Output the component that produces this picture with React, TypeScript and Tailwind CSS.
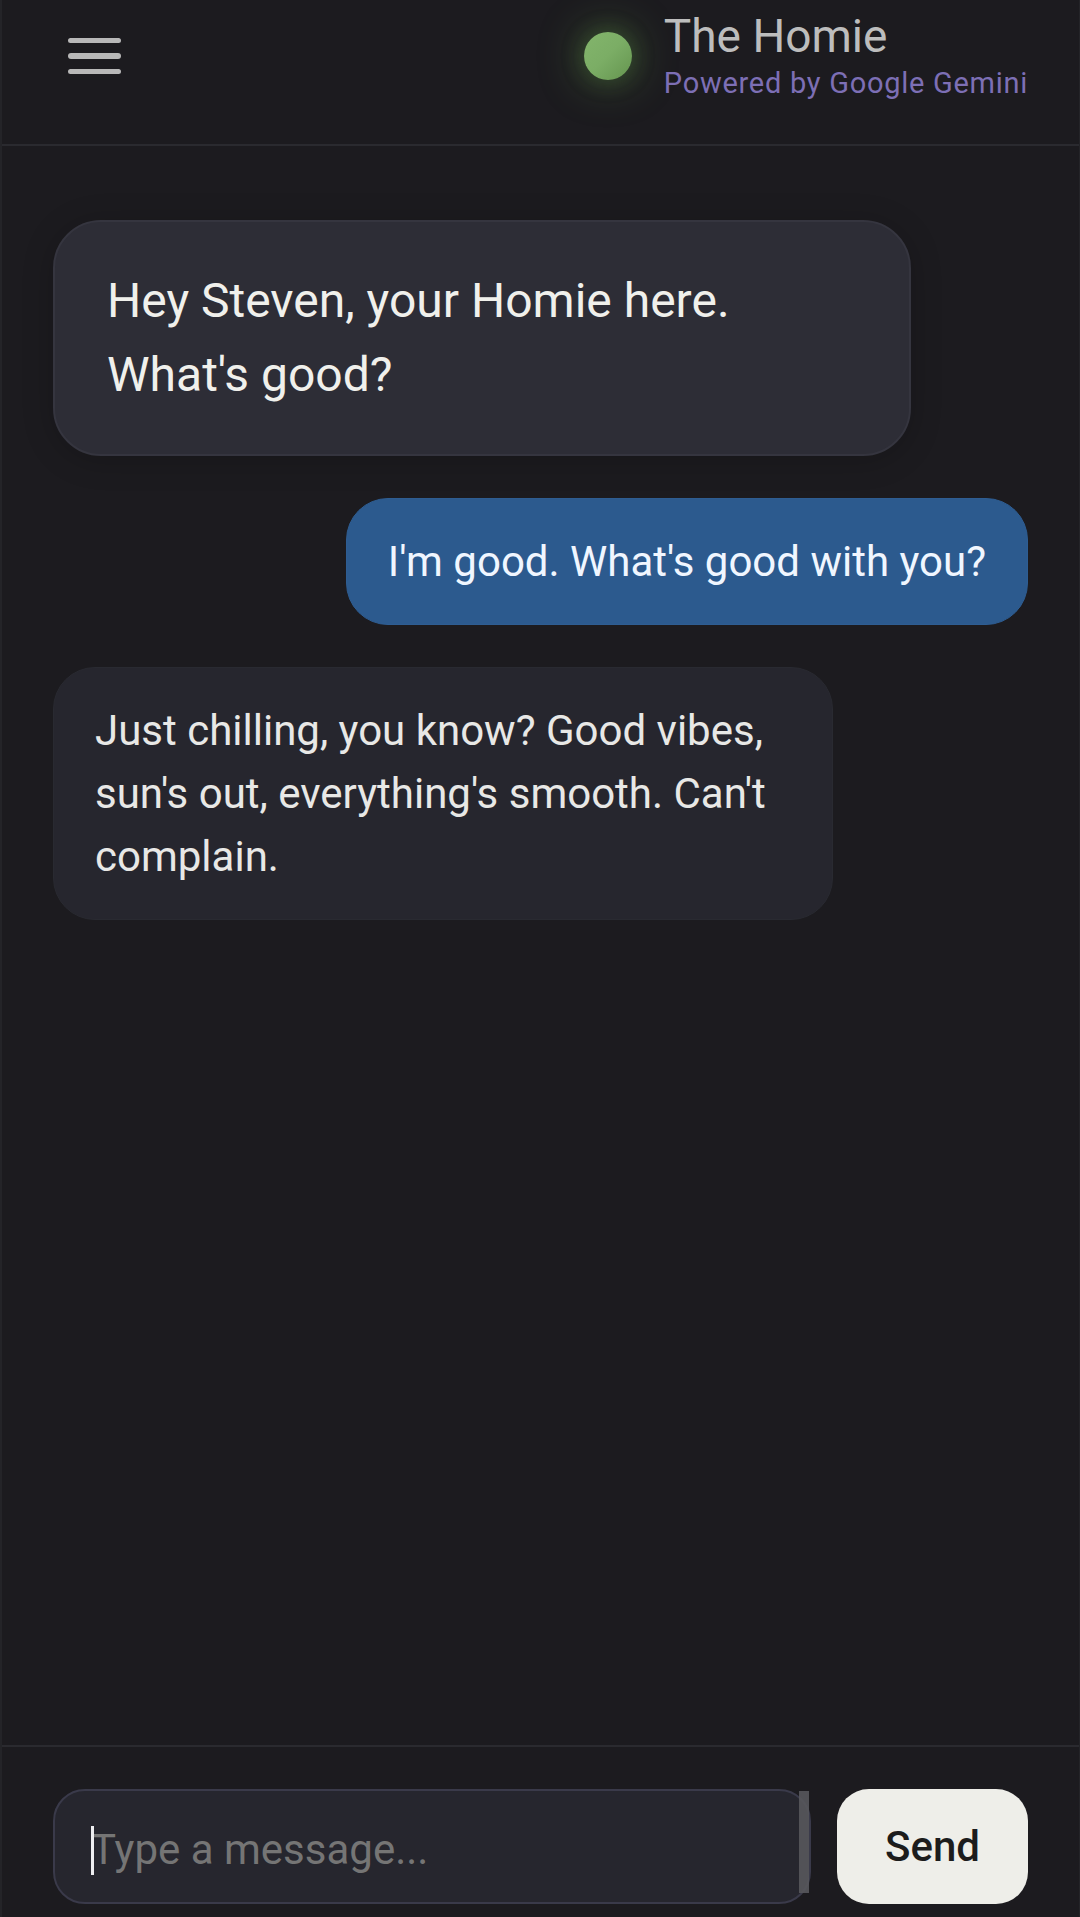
import React, { useState } from "react";

interface Message {
  id: number;
  role: "user" | "bot" | "greeting";
  text: string;
}

const initialMessages: Message[] = [
  { id: 1, role: "greeting", text: "Hey Steven, your Homie here. What's good?" },
  { id: 2, role: "user", text: "I'm good. What's good with you?" },
  {
    id: 3,
    role: "bot",
    text: "Just chilling, you know? Good vibes, sun's out, everything's smooth. Can't complain."
  }
];

const bubbleStyles = {
  greeting:
    "self-start w-[88%] px-[52px] py-[42px] rounded-[48px] border-2 border-[#35353f] bg-[#2d2d36] text-[#f0f0ec] text-[48px] leading-[74px] shadow-[0_4px_32px_rgba(0,0,0,0.2)]",
  user:
    "self-end max-w-[80%] px-[41px] py-[31px] rounded-[42px] border border-[#2e5d92] bg-[#2c5a8e] text-[#f0f6ff] text-[42px] leading-[63px]",
  bot:
    "self-start max-w-[80%] px-[41px] py-[31px] rounded-[42px] border border-[#292a31] bg-[#26262e] text-[#e8e8e6] text-[42px] leading-[63px]"
};

const Header: React.FC = () => (
  <header className="flex items-center justify-between px-[51px] pt-[9px] pb-[41px] border-b-2 border-[#2a2a2f]">
    <button type="button" aria-label="Open menu" className="px-[15px] py-2">
      <svg width="53" height="36" viewBox="0 0 53 36" fill="#b8b8b8">
        <rect width="53" height="5" rx="2.5" />
        <rect y="15" width="53" height="6" rx="3" />
        <rect y="31" width="53" height="5" rx="2.5" />
      </svg>
    </button>

    <div className="flex items-center gap-8">
      <div className="w-12 h-12 rounded-full bg-linear-to-br from-[#83b56c] via-[#7bad65] to-[#64944f] shadow-[0_0_24px_rgba(110,180,80,0.25),0_0_48px_rgba(110,180,80,0.45)]" />
      <div>
        <h1 className="text-[46px] leading-[54px] text-[#bdbdbd]">The Homie</h1>
        <p className="text-[29px] leading-[40px] tracking-wide text-[#7d6fb5]">
          Powered by Google Gemini
        </p>
      </div>
    </div>
  </header>
);

export default function App() {
  const [messages, setMessages] = useState<Message[]>(initialMessages);
  const [input, setInput] = useState("");

  const handleSubmit = (e: React.FormEvent) => {
    e.preventDefault();
    const text = input.trim();
    if (!text) {
      return;
    }
    setMessages(prev => [...prev, { id: prev.length + 1, role: "user", text }]);
    setInput("");
  };

  return (
    <div className="flex flex-col h-screen bg-[#1c1b1f] border-l-2 border-r border-[#242428] font-['Roboto',sans-serif]">
      <Header />

      <main className="flex flex-col flex-1 gap-[42px] px-[51px] pt-[74px] pb-8 overflow-y-auto">
        {messages.map(message => (
          <div key={message.id} className={bubbleStyles[message.role]}>
            {message.text}
          </div>
        ))}
      </main>

      <form
        onSubmit={handleSubmit}
        className="flex gap-[26px] px-[51px] pt-[42px] pb-[13px] border-t-2 border-[#2a2a2f]"
      >
        <div className="relative flex flex-1">
          <textarea
            aria-label="Message"
            rows={1}
            value={input}
            onChange={e => setInput(e.target.value)}
            placeholder="Type a message..."
            className="w-full h-[115px] pl-9 pr-12 pt-[27px] rounded-[32px] border-2 border-[#3a3a4a] bg-[#26262e] text-[42px] leading-[63px] text-[#f0f0ec] placeholder:text-[#757575] caret-transparent resize-none overflow-hidden outline-none"
          />
          {/* caret */}
          {!input && <span className="absolute left-[38px] top-[37px] w-[3px] h-[49px] bg-[#ededf0]" />}
          {/* scrollbar thumb */}
          <span className="absolute right-[2px] top-[2px] w-[10px] h-[102px] bg-[#58585c]/90" />
        </div>
        <button
          type="submit"
          className="h-[115px] px-12 rounded-[32px] bg-[#eeeee9] text-[42px] leading-[63px] font-medium text-[#1c1c1c]"
        >
          Send
        </button>
      </form>
    </div>
  );
}
